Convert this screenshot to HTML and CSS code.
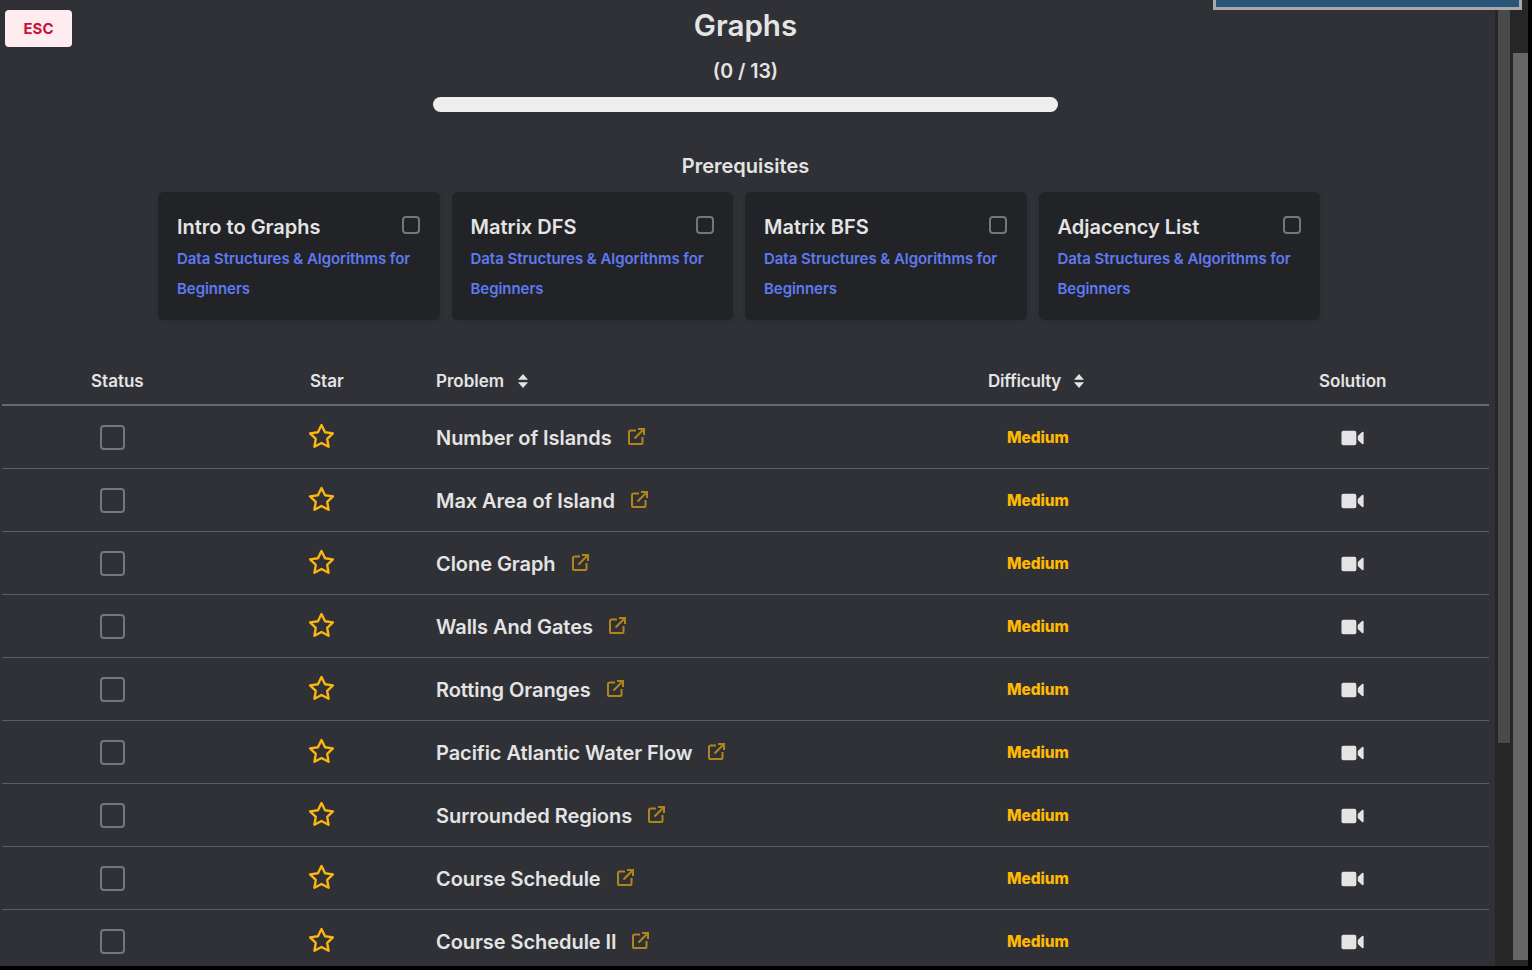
FILE: index.html

```html
<!DOCTYPE html>
<html lang="en">
<head>
    <meta charset="UTF-8">
    <meta name="viewport" content="width=device-width, initial-scale=1.0">
    <link rel="stylesheet" href="styles.css">
    <title>Graphs</title>
</head>
<body>
    <svg class="icon-defs" width="0" height="0">
        <symbol id="icon-star" viewBox="0 0 26 26">
            <polygon points="13 2 16.4 8.9 24 10 18.5 15.3 19.8 22.9 13 19.3 6.2 22.9 7.5 15.3 2 10 9.6 8.9" fill="none" stroke="currentColor" stroke-width="2.3" stroke-linejoin="round"/>
        </symbol>
        <symbol id="icon-link" viewBox="0 0 17 17">
            <path d="M8 2.5H2.6A1.6 1.6 0 0 0 1 4.1v10.3A1.6 1.6 0 0 0 2.6 16h10.3a1.6 1.6 0 0 0 1.6-1.6V9" fill="none" stroke="currentColor" stroke-width="2"/>
            <path d="M6.5 10.5 15.5 1.5M10 1h6v6" fill="none" stroke="currentColor" stroke-width="2"/>
        </symbol>
        <symbol id="icon-video" viewBox="0 0 24 16">
            <rect x="0.5" y="0.5" width="15.5" height="15" rx="2" fill="currentColor"/>
            <path d="M17.5 6 22 1.8c.7-.6 1.6-.2 1.6.7v11c0 .9-.9 1.3-1.6.7L17.5 10z" fill="currentColor"/>
        </symbol>
        <symbol id="icon-sort" viewBox="0 0 10 14">
            <path d="M5 0 10 5.8H0zM5 14 0 8.2h10z" fill="currentColor"/>
        </symbol>
    </svg>

    <div class="window">
        <main class="panel">
            <button class="esc-btn">ESC</button>
            <div class="corner-box"></div>

            <div class="header">
                <h1>Graphs</h1>
                <p class="count">(0 / 13)</p>
                <div class="progress"></div>
                <h2>Prerequisites</h2>
            </div>

            <div class="cards">
                <div class="card">
                    <div class="card-top"><h3>Intro to Graphs</h3><span class="box small"></span></div>
                    <a class="course">Data Structures &amp; Algorithms for Beginners</a>
                </div>
                <div class="card">
                    <div class="card-top"><h3>Matrix DFS</h3><span class="box small"></span></div>
                    <a class="course">Data Structures &amp; Algorithms for Beginners</a>
                </div>
                <div class="card">
                    <div class="card-top"><h3>Matrix BFS</h3><span class="box small"></span></div>
                    <a class="course">Data Structures &amp; Algorithms for Beginners</a>
                </div>
                <div class="card">
                    <div class="card-top"><h3>Adjacency List</h3><span class="box small"></span></div>
                    <a class="course">Data Structures &amp; Algorithms for Beginners</a>
                </div>
            </div>

            <table class="problems">
                <thead>
                    <tr>
                        <th class="col-status">Status</th>
                        <th class="col-star">Star</th>
                        <th class="col-problem">Problem <svg class="sort"><use href="#icon-sort"/></svg></th>
                        <th class="col-difficulty">Difficulty <svg class="sort"><use href="#icon-sort"/></svg></th>
                        <th class="col-solution">Solution</th>
                    </tr>
                </thead>
                <tbody>
                    <tr>
                        <td class="col-status"><span class="box"></span></td>
                        <td class="col-star"><svg class="star"><use href="#icon-star"/></svg></td>
                        <td class="col-problem">Number of Islands <svg class="ext"><use href="#icon-link"/></svg></td>
                        <td class="col-difficulty"><span class="medium">Medium</span></td>
                        <td class="col-solution"><svg class="video"><use href="#icon-video"/></svg></td>
                    </tr>
                    <tr>
                        <td class="col-status"><span class="box"></span></td>
                        <td class="col-star"><svg class="star"><use href="#icon-star"/></svg></td>
                        <td class="col-problem">Max Area of Island <svg class="ext"><use href="#icon-link"/></svg></td>
                        <td class="col-difficulty"><span class="medium">Medium</span></td>
                        <td class="col-solution"><svg class="video"><use href="#icon-video"/></svg></td>
                    </tr>
                    <tr>
                        <td class="col-status"><span class="box"></span></td>
                        <td class="col-star"><svg class="star"><use href="#icon-star"/></svg></td>
                        <td class="col-problem">Clone Graph <svg class="ext"><use href="#icon-link"/></svg></td>
                        <td class="col-difficulty"><span class="medium">Medium</span></td>
                        <td class="col-solution"><svg class="video"><use href="#icon-video"/></svg></td>
                    </tr>
                    <tr>
                        <td class="col-status"><span class="box"></span></td>
                        <td class="col-star"><svg class="star"><use href="#icon-star"/></svg></td>
                        <td class="col-problem">Walls And Gates <svg class="ext"><use href="#icon-link"/></svg></td>
                        <td class="col-difficulty"><span class="medium">Medium</span></td>
                        <td class="col-solution"><svg class="video"><use href="#icon-video"/></svg></td>
                    </tr>
                    <tr>
                        <td class="col-status"><span class="box"></span></td>
                        <td class="col-star"><svg class="star"><use href="#icon-star"/></svg></td>
                        <td class="col-problem">Rotting Oranges <svg class="ext"><use href="#icon-link"/></svg></td>
                        <td class="col-difficulty"><span class="medium">Medium</span></td>
                        <td class="col-solution"><svg class="video"><use href="#icon-video"/></svg></td>
                    </tr>
                    <tr>
                        <td class="col-status"><span class="box"></span></td>
                        <td class="col-star"><svg class="star"><use href="#icon-star"/></svg></td>
                        <td class="col-problem">Pacific Atlantic Water Flow <svg class="ext"><use href="#icon-link"/></svg></td>
                        <td class="col-difficulty"><span class="medium">Medium</span></td>
                        <td class="col-solution"><svg class="video"><use href="#icon-video"/></svg></td>
                    </tr>
                    <tr>
                        <td class="col-status"><span class="box"></span></td>
                        <td class="col-star"><svg class="star"><use href="#icon-star"/></svg></td>
                        <td class="col-problem">Surrounded Regions <svg class="ext"><use href="#icon-link"/></svg></td>
                        <td class="col-difficulty"><span class="medium">Medium</span></td>
                        <td class="col-solution"><svg class="video"><use href="#icon-video"/></svg></td>
                    </tr>
                    <tr>
                        <td class="col-status"><span class="box"></span></td>
                        <td class="col-star"><svg class="star"><use href="#icon-star"/></svg></td>
                        <td class="col-problem">Course Schedule <svg class="ext"><use href="#icon-link"/></svg></td>
                        <td class="col-difficulty"><span class="medium">Medium</span></td>
                        <td class="col-solution"><svg class="video"><use href="#icon-video"/></svg></td>
                    </tr>
                    <tr>
                        <td class="col-status"><span class="box"></span></td>
                        <td class="col-star"><svg class="star"><use href="#icon-star"/></svg></td>
                        <td class="col-problem">Course Schedule II <svg class="ext"><use href="#icon-link"/></svg></td>
                        <td class="col-difficulty"><span class="medium">Medium</span></td>
                        <td class="col-solution"><svg class="video"><use href="#icon-video"/></svg></td>
                    </tr>
                </tbody>
            </table>
        </main>

        <div class="rail rail-inner"><div class="thumb"></div></div>
        <div class="rail rail-outer"><div class="thumb"></div></div>
    </div>
</body>
</html>
```

FILE: styles.css

```css
html, body {
    height: 100%;
    margin: 0;
    overflow: hidden;
    background-color: #000;
}

body {
    font-family: 'Inter', 'Liberation Sans', sans-serif;
    color: #e4e4e4;
}

.icon-defs {
    display: none;
}

.window {
    display: flex;
    width: 1528px;
    height: 966px;
    overflow: hidden;
}

.panel {
    position: relative;
    width: 1487px;
    padding: 0 6px 0 2px;
    overflow: hidden;
    background-color: #303136;
}

/* Scrollbars */
.rail {
    background-color: #262626;
    box-sizing: border-box;
}

.rail-inner {
    width: 15px;
    padding-left: 3px;
}

.rail-inner .thumb {
    width: 12px;
    height: 743px;
    background-color: #4a4a4a;
}

.rail-outer {
    width: 18px;
    padding: 53px 0 6px 3px;
}

.rail-outer .thumb {
    width: 15px;
    height: 100%;
    background-color: #666;
}

/* Overlays */
.esc-btn {
    position: absolute;
    top: 10px;
    left: 5px;
    width: 67px;
    height: 37px;
    padding: 0;
    border: none;
    border-radius: 4px;
    background-color: #feecf0;
    color: #cc0f35;
    font-family: inherit;
    font-size: 15px;
    font-weight: 700;
}

.corner-box {
    position: fixed;
    top: -3px;
    left: 1213px;
    width: 303px;
    height: 7px;
    border: 3px solid #a9a9a9;
    background-color: #295578;
}

/* Header */
.header {
    text-align: center;
}

.header h1 {
    margin: 0;
    padding-top: 7px;
    font-size: 29.6px;
    line-height: 36px;
    font-weight: 600;
}

.count {
    margin: 16px 0 0;
    font-size: 19.5px;
    line-height: 24px;
    font-weight: 600;
}

.progress {
    width: 625px;
    height: 15px;
    margin: 14px auto 0;
    border-radius: 8px;
    background-color: #eee;
}

.header h2 {
    margin: 42px 0 0;
    font-size: 20px;
    line-height: 24px;
    font-weight: 600;
}

/* Prerequisite cards */
.cards {
    display: flex;
    gap: 12px;
    width: 1162px;
    margin: 14px 0 0 156px;
}

.card {
    flex: 1;
    box-sizing: border-box;
    height: 128px;
    padding: 22px 19.5px 0 19px;
    border-radius: 6px;
    background-color: #222327;
    box-shadow: 0 1px 4px rgba(0, 0, 0, 0.15);
}

.card-top {
    display: flex;
    justify-content: space-between;
    align-items: flex-start;
}

.card h3 {
    margin: 0;
    font-size: 20px;
    line-height: 26px;
    font-weight: 600;
}

.course {
    display: block;
    margin-top: 4px;
    font-size: 15px;
    line-height: 30px;
    font-weight: 600;
    letter-spacing: -0.05px;
    color: #5f79f0;
}

.box {
    display: block;
    box-sizing: border-box;
    width: 25px;
    height: 25px;
    border: 2px solid #75767a;
    border-radius: 4px;
}

.box.small {
    width: 18px;
    height: 18px;
    margin-top: 2px;
}

/* Problem table */
.problems {
    width: 1487px;
    margin-top: 30px;
    border-collapse: collapse;
    table-layout: fixed;
}

.problems th {
    height: 55px;
    padding-top: 7px;
    padding-bottom: 0;
    border-bottom: 2px solid #68696c;
    box-sizing: border-box;
    font-size: 17px;
    font-weight: 600;
    text-align: left;
}

.problems td {
    height: 63px;
    padding-top: 1px;
    padding-bottom: 0;
    border-bottom: 1px solid #5c5d60;
    box-sizing: border-box;
    font-size: 20px;
    font-weight: 600;
    letter-spacing: -0.06px;
}

.col-status { width: 307px; padding-left: 89px; }
.col-star { width: 127px; padding-left: 1px; }
.col-problem { width: 552px; padding-left: 0; }
.col-difficulty { width: 330px; padding-left: 0; }
.col-solution { padding-left: 0; }

th.col-difficulty { letter-spacing: -0.2px; }
th.col-solution { padding-left: 1px; }
th.col-problem .sort { margin-left: 10px; }

.problems td.col-problem { padding-top: 2px; }
.problems td.col-difficulty { padding-left: 19px; padding-top: 2px; }
.problems td.col-status { padding-left: 98px; }
.problems td.col-star { padding-left: 0; }
.problems td.col-solution { padding-left: 23px; padding-top: 2px; }

.sort {
    width: 10px;
    height: 14px;
    margin-left: 9px;
    vertical-align: -1px;
}

.star {
    display: block;
    width: 27px;
    height: 27px;
    margin: -2px 0 0 -1px;
    color: #fbb70f;
}

.ext {
    width: 17px;
    height: 17px;
    margin-left: 11px;
    color: #b0851c;
}

.video {
    display: block;
    width: 23px;
    height: 16px;
    color: #e4e4e4;
}

.medium {
    font-size: 15.4px;
    font-weight: 800;
    color: #ffb900;
    vertical-align: 2px;
}
```
